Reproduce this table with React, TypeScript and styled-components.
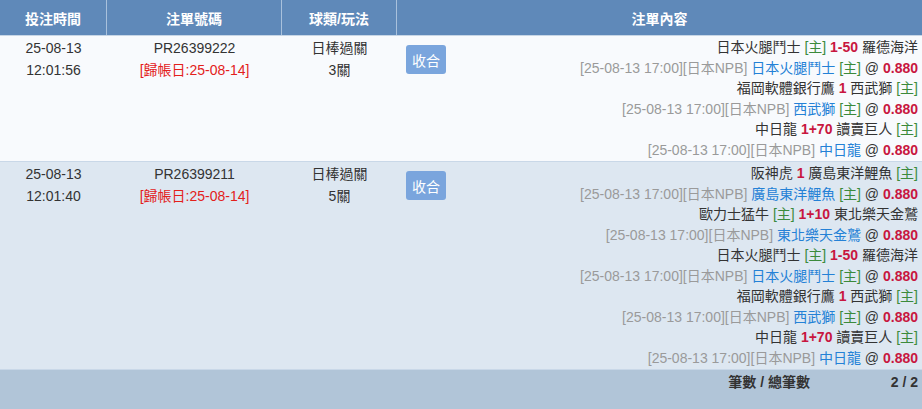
import React from "react";
import styled, { createGlobalStyle } from "styled-components";

const GlobalStyle = createGlobalStyle`
  html, body {
    margin: 0;
    padding: 0;
    background: #ffffff;
  }
  body {
    font-family: "Liberation Sans", "Noto Sans CJK TC", sans-serif;
    font-size: 14px;
    color: #333333;
  }
`;

type Bet = {
  home: string;
  away: string;
  line: string;
  homeIsHost: boolean;
  pick: string;
  pickIsHost: boolean;
};

type Order = {
  date: string;
  time: string;
  id: string;
  settle: string;
  game: string;
  legs: string;
  bets: Bet[];
};

const ham: Bet = { home: "日本火腿鬥士", away: "羅德海洋", line: "1-50", homeIsHost: true, pick: "日本火腿鬥士", pickIsHost: true };
const hawks: Bet = { home: "福岡軟體銀行鷹", away: "西武獅", line: "1", homeIsHost: false, pick: "西武獅", pickIsHost: true };
const dragons: Bet = { home: "中日龍", away: "讀賣巨人", line: "1+70", homeIsHost: false, pick: "中日龍", pickIsHost: false };

const orders: Order[] = [
  {
    date: "25-08-13",
    time: "12:01:56",
    id: "PR26399222",
    settle: "[歸帳日:25-08-14]",
    game: "日棒過關",
    legs: "3關",
    bets: [ham, hawks, dragons],
  },
  {
    date: "25-08-13",
    time: "12:01:40",
    id: "PR26399211",
    settle: "[歸帳日:25-08-14]",
    game: "日棒過關",
    legs: "5關",
    bets: [
      { home: "阪神虎", away: "廣島東洋鯉魚", line: "1", homeIsHost: false, pick: "廣島東洋鯉魚", pickIsHost: true },
      { home: "歐力士猛牛", away: "東北樂天金鷲", line: "1+10", homeIsHost: true, pick: "東北樂天金鷲", pickIsHost: false },
      ham,
      hawks,
      dragons,
    ],
  },
];

const COLS = "107px 175px 115px 1fr";

const Table = styled.div`
  width: 922px;
  display: flex;
  flex-direction: column;
`;

const HeadRow = styled.div`
  display: grid;
  grid-template-columns: ${COLS};
  height: 35px;
  background: #5f89b9;
  border-bottom: 1px solid #c7d6e6;
`;

const HeadCell = styled.div<{ $last?: boolean }>`
  display: flex;
  align-items: center;
  justify-content: center;
  color: #ffffff;
  font-weight: bold;
  font-size: 14px;
  border-right: ${(p) => (p.$last ? "none" : "1px solid #a9c1dc")};
`;

const Row = styled.div<{ $alt?: boolean }>`
  display: grid;
  grid-template-columns: ${COLS};
  background: ${(p) => (p.$alt ? "#dde7f1" : "#f8fafd")};
  border-bottom: 1px solid #c9d8e8;
  padding: 1px 0;
  line-height: 20.5px;
`;

const Cell = styled.div`
  display: flex;
  flex-direction: column;
  align-items: center;
  color: #333333;
  padding-top: 1px;
  line-height: 21.5px;
`;

const Settle = styled.span`
  color: #e3201b;
`;

const ToggleCell = styled.div`
  display: flex;
  align-items: flex-start;
  justify-content: space-between;
  padding: 8px 4px 0 9px;
`;

const ToggleButton = styled.button`
  width: 40px;
  height: 29px;
  border: none;
  border-radius: 3px;
  background: #7aa5dd;
  color: #ffffff;
  font-family: "Liberation Sans", "Noto Sans CJK TC", sans-serif;
  font-size: 14px;
  padding: 0;
  cursor: pointer;
`;

const BetList = styled.div`
  display: flex;
  flex-direction: column;
  align-items: flex-end;
  margin-top: -8px;
  white-space: nowrap;
`;

const Line = styled.div``;

const Team = styled.span`
  color: #333333;
`;

const Host = styled.span`
  color: #3b8a3b;
`;

const Handicap = styled.span`
  color: #c8163f;
  font-weight: bold;
`;

const Meta = styled.span`
  color: #9a9a9a;
`;

const Pick = styled.span`
  color: #2481d6;
`;

const Odds = styled.span`
  color: #c8163f;
  font-weight: bold;
`;

const FootRow = styled.div`
  display: grid;
  grid-template-columns: 1fr 112px;
  height: 41px;
  background: #b1c5d8;
  padding-top: 2px;
  box-sizing: border-box;
  line-height: 20px;
  font-weight: bold;
  color: #333333;
`;

const FootLabel = styled.div`
  text-align: right;
`;

const FootValue = styled.div`
  text-align: right;
  padding-right: 4px;
`;

const BetLines = ({ bet }: { bet: Bet }) => (
  <>
    <Line>
      <Team>{bet.home}</Team>
      {bet.homeIsHost && <> <Host>[主]</Host></>} <Handicap>{bet.line}</Handicap>{" "}
      <Team>{bet.away}</Team>
      {!bet.homeIsHost && <> <Host>[主]</Host></>}
    </Line>
    <Line>
      <Meta>[25-08-13 17:00][日本NPB]</Meta> <Pick>{bet.pick}</Pick>
      {bet.pickIsHost && <> <Host>[主]</Host></>} @ <Odds>0.880</Odds>
    </Line>
  </>
);

export default function App() {
  return (
    <>
      <GlobalStyle />
      <Table>
        <HeadRow>
          <HeadCell>投注時間</HeadCell>
          <HeadCell>注單號碼</HeadCell>
          <HeadCell>球類/玩法</HeadCell>
          <HeadCell $last>注單內容</HeadCell>
        </HeadRow>
        {orders.map((o, i) => (
          <Row key={o.id} $alt={i % 2 === 1}>
            <Cell>
              <span>{o.date}</span>
              <span>{o.time}</span>
            </Cell>
            <Cell>
              <span>{o.id}</span>
              <Settle>{o.settle}</Settle>
            </Cell>
            <Cell>
              <span>{o.game}</span>
              <span>{o.legs}</span>
            </Cell>
            <ToggleCell>
              <ToggleButton>收合</ToggleButton>
              <BetList>
                {o.bets.map((b, j) => (
                  <BetLines key={j} bet={b} />
                ))}
              </BetList>
            </ToggleCell>
          </Row>
        ))}
        <FootRow>
          <FootLabel>筆數 / 總筆數</FootLabel>
          <FootValue>2 / 2</FootValue>
        </FootRow>
      </Table>
    </>
  );
}
